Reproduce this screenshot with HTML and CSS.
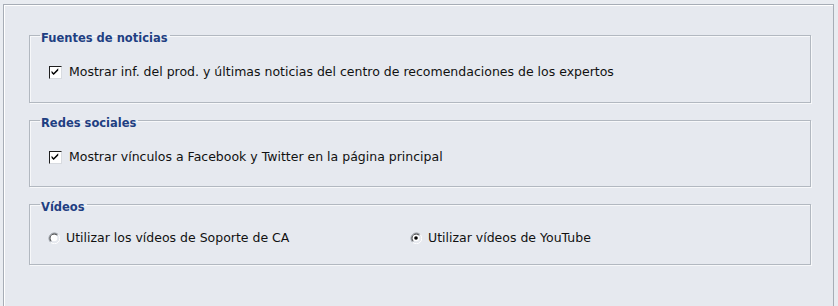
FILE: index.html
```html
<!DOCTYPE html>
<html lang="es">
<head>
<meta charset="utf-8">
<link rel="stylesheet" href="styles.css">
</head>
<body>
<div class="panel">
  <fieldset class="group group-news">
    <legend class="group-title">Fuentes de noticias</legend>
    <label class="option">
      <span class="check"><svg width="13" height="13" viewBox="0 0 13 13"><path d="M2.8 5.8 L5 8 L10 3 L10 5.4 L5 10.4 L2.8 8.2 Z" fill="#000"/></svg></span>
      <span class="label-text">Mostrar inf. del prod. y últimas noticias del centro de recomendaciones de los expertos</span>
    </label>
  </fieldset>
  <fieldset class="group group-social">
    <legend class="group-title">Redes sociales</legend>
    <label class="option">
      <span class="check"><svg width="13" height="13" viewBox="0 0 13 13"><path d="M2.8 5.8 L5 8 L10 3 L10 5.4 L5 10.4 L2.8 8.2 Z" fill="#000"/></svg></span>
      <span class="label-text">Mostrar vínculos a Facebook y Twitter en la página principal</span>
    </label>
  </fieldset>
  <fieldset class="group group-videos">
    <legend class="group-title">Vídeos</legend>
    <div class="radios">
      <label class="option radio-opt">
        <span class="radio"><svg width="12" height="12" viewBox="0 0 12 12">
          <path d="M10.2 2.6 A5 5 0 1 0 2.6 10.2" fill="none" stroke="#8a8f96" stroke-width="1"/>
          <path d="M9.2 3.3 A4 4 0 1 0 3.3 9.2" fill="none" stroke="#2b2b2b" stroke-width="1"/>
          <path d="M2.6 10.2 A5 5 0 0 0 10.2 2.6" fill="none" stroke="#ffffff" stroke-width="1"/>
          <circle cx="6" cy="6" r="3.3" fill="#ffffff"/>
        </svg></span>
        <span class="label-text">Utilizar los vídeos de Soporte de CA</span>
      </label>
      <label class="option radio-opt">
        <span class="radio"><svg width="12" height="12" viewBox="0 0 12 12">
          <path d="M10.2 2.6 A5 5 0 1 0 2.6 10.2" fill="none" stroke="#8a8f96" stroke-width="1"/>
          <path d="M9.2 3.3 A4 4 0 1 0 3.3 9.2" fill="none" stroke="#2b2b2b" stroke-width="1"/>
          <path d="M2.6 10.2 A5 5 0 0 0 10.2 2.6" fill="none" stroke="#ffffff" stroke-width="1"/>
          <circle cx="6" cy="6" r="3.3" fill="#ffffff"/>
          <circle cx="6" cy="6" r="1.8" fill="#000"/>
        </svg></span>
        <span class="label-text">Utilizar vídeos de YouTube</span>
      </label>
    </div>
  </fieldset>
</div>
</body>
</html>
```
FILE: styles.css
```css
html, body {
  margin: 0;
  padding: 0;
  background: #e9ecf1;
}
body {
  width: 838px;
  height: 306px;
  overflow: hidden;
  font-family: "DejaVu Sans", Verdana, sans-serif;
  font-size: 12.5px;
  color: #111;
}
.panel {
  margin: 4px 4px 0 3px;
  height: 310px;
  box-sizing: border-box;
  border: 1px solid #a7adb6;
  border-bottom: none;
  box-shadow: inset 1px 1px 0 #ffffff;
  background: #e6e9ef;
  padding: 21px 22px 0 25px;
  display: flex;
  flex-direction: column;
  gap: 8px;
}
.group {
  margin: 0;
  padding: 0 0 0 18px;
  border: 1px solid #b2b8c0;
  box-shadow: 1px 1px 0 #f7f8fa, inset 1px 1px 0 #f7f8fa;
  box-sizing: border-box;
  min-width: 0;
}
.group-news { height: 77px; }
.group-social { height: 76px; }
.group-videos { height: 70px; }
.group-title {
  padding: 6px 2px 0 1px;
  margin-left: -8px;
  font-weight: bold;
  color: #1f3f82;
  font-size: 11.5px;
  line-height: 13px;
}
.option {
  display: flex;
  align-items: center;
  height: 16px;
  margin-top: 19px;
}
.check {
  width: 13px;
  height: 13px;
  box-sizing: border-box;
  background: #fff;
  border: 1px solid #1e1e1e;
  border-right-color: #d8dbe0;
  border-bottom-color: #d8dbe0;
  display: flex;
  align-items: center;
  justify-content: center;
  margin-left: 1px;
  margin-right: 7px;
}
.check svg { display: block; margin: -1px 0 0 -1px; }
.radios {
  display: flex;
  margin-top: 16px;
}
.radios .option { margin-top: 0; }
.radio-opt:first-child { width: 362px; }
.radio {
  width: 12px;
  height: 12px;
  margin-right: 6px;
  display: block;
}
.radio svg { display: block; }
.label-text {
  white-space: nowrap;
  line-height: 16px;
}
```
